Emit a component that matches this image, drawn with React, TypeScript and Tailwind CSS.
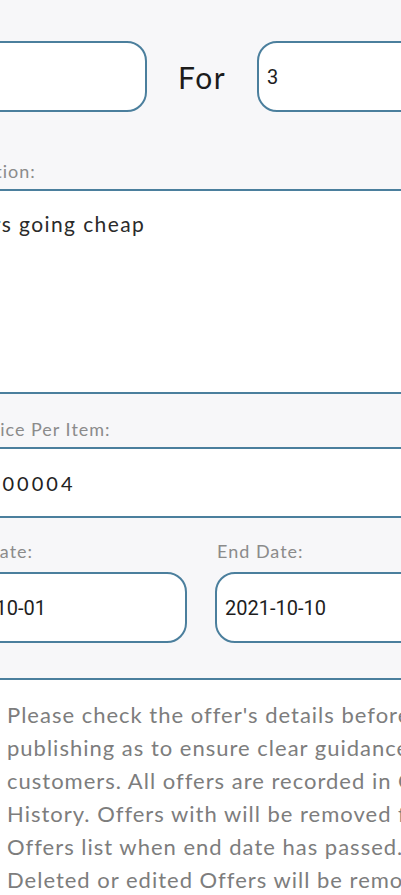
import React from "react"

const lines = [
  "Please check the offer's details before",
  "publishing as to ensure clear guidance to",
  "customers. All offers are recorded in Offer",
  "History. Offers with will be removed from",
  "Offers list when end date has passed.",
  "Deleted or edited Offers will be removed",
]

const App = () => {
  return (
    <div className="w-[401px] h-[895px] overflow-hidden bg-[#f7f7f9] font-['Lato',sans-serif]">
      <div className="ml-[-65px] w-[532px] pt-[41px]">
        <div className="flex items-center">
          <div className={`${styles.box} w-[212px] rounded-[20px]`}>
            <span className={styles.num}>2</span>
          </div>
          <div className="ml-[31px] w-[49px] text-[30px] leading-none tracking-[1.5px] text-[#1c1c1c]">
            For
          </div>
          <div className={`${styles.box} ml-[30px] w-[210px] rounded-[20px]`}>
            <span className={styles.num}>3</span>
          </div>
        </div>

        <div className={`${styles.label} mt-[47px] -ml-[9px]`}>Description:</div>
        <div className="mt-[6px] h-[205px] rounded-[20px] border-2 border-[#4b7f9d] bg-white px-[8px] pt-[19px] text-[21px] leading-[28px] tracking-[1.4px] text-[#2a2a2a]">
          Offers going cheap
        </div>

        <div className={`${styles.label} mt-[23px] -ml-[9px]`}>Offer Price Per Item:</div>
        <div className={`${styles.box} mt-[6px] rounded-[20px] pl-[14px] text-[20px] tracking-[3px] text-[#222]`}>
          0.0000004
        </div>

        <div className="mt-[21px] grid grid-cols-2 gap-x-[28px]">
          <div>
            <div className={styles.label}>Start Date:</div>
            <div className={`${styles.box} mt-[9px] rounded-[20px]`}>
              <span className={styles.num}>2021-10-01</span>
            </div>
          </div>
          <div>
            <div className={styles.label}>End Date:</div>
            <div className={`${styles.box} mt-[9px] rounded-[20px]`}>
              <span className={styles.num}>2021-10-10</span>
            </div>
          </div>
        </div>
      </div>

      <div className="mt-[35px] border-t-2 border-[#4b7f9d] bg-white h-[300px] pl-[7px] pt-[18px] text-[22px] leading-[33px] tracking-[1px] text-[#7d7d7d] whitespace-nowrap">
        {lines.map((line) => (
          <div key={line}>{line}</div>
        ))}
      </div>
    </div>
  )
}

const styles = {
  box: "flex h-[71px] items-center border-2 border-[#4b7f9d] bg-white px-[8px]",
  label: "pl-[2px] text-[18px] leading-[24px] tracking-[1px] text-[#8b8b8b]",
  num: "font-['Roboto',sans-serif] text-[20px] text-[#1e1e1e]",
}

export default App
